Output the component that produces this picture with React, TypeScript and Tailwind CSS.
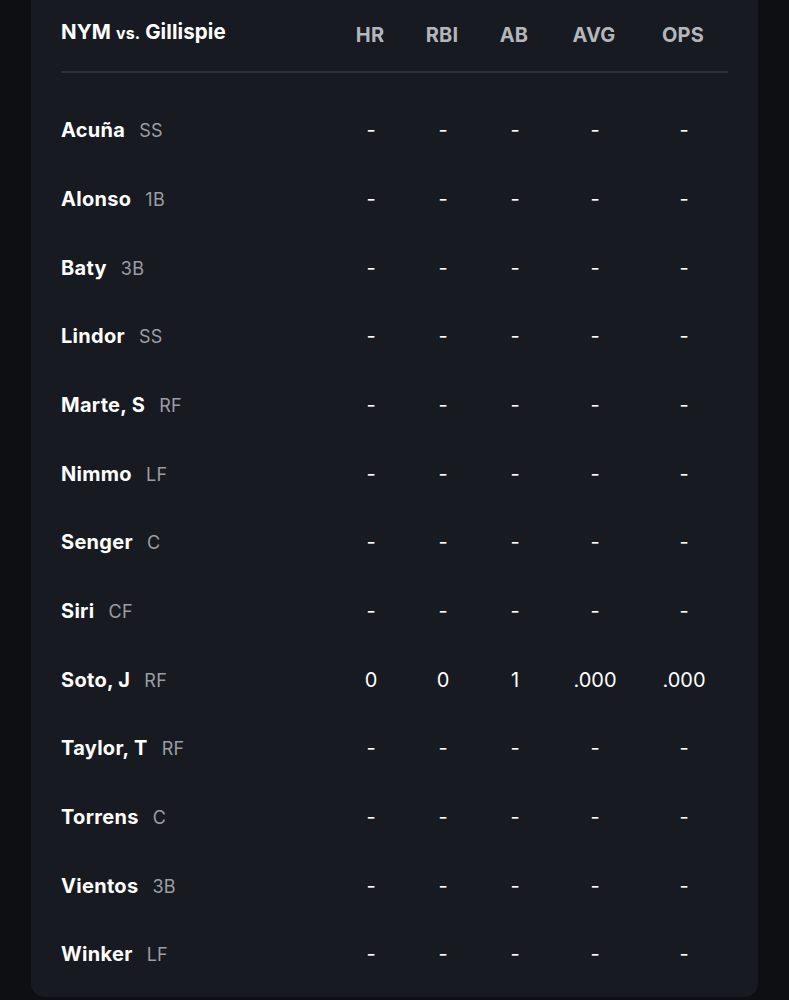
import React from "react";

type Row = {
	name: string;
	pos: string;
	stats?: [string, string, string, string, string];
};

const rows: Row[] = [
	{ name: "Acuña", pos: "SS" },
	{ name: "Alonso", pos: "1B" },
	{ name: "Baty", pos: "3B" },
	{ name: "Lindor", pos: "SS" },
	{ name: "Marte, S", pos: "RF" },
	{ name: "Nimmo", pos: "LF" },
	{ name: "Senger", pos: "C" },
	{ name: "Siri", pos: "CF" },
	{ name: "Soto, J", pos: "RF", stats: ["0", "0", "1", ".000", ".000"] },
	{ name: "Taylor, T", pos: "RF" },
	{ name: "Torrens", pos: "C" },
	{ name: "Vientos", pos: "3B" },
	{ name: "Winker", pos: "LF" },
];

const headers = ["HR", "RBI", "AB", "AVG", "OPS"];
// stat column widths, measured from the right edge
const colW = ["w-[72px]", "w-[72px]", "w-[72px]", "w-[88px]", "w-[90px]"];

export default function App() {
	return (
		<div
			className="min-h-screen bg-[#0d0f12] px-[31px] pb-[3px]"
			style={{ fontFamily: "Inter, 'Liberation Sans', sans-serif" }}
		>
			<div className="bg-[#171a20] rounded-b-[14px] px-[30px] pb-[8px]">
				{/* header */}
				<div className="flex items-center h-[64px]">
					<div className="flex-1 text-white font-bold text-[20.5px] tracking-[0.1px]">
						NYM <span className="text-[16px]">vs.</span> Gillispie
					</div>
					{headers.map((h, i) => (
						<div
							key={h}
							className={`${colW[i]} text-center text-[#b3b6bb] font-bold text-[20px] tracking-[0.2px] mt-[6px]`}
						>
							{h}
						</div>
					))}
				</div>
				<div className="mt-[7px] h-[2px] bg-[#2c3037]" />

				{/* rows */}
				<div className="pt-[23px]">
					{rows.map((r) => (
						<div key={r.name} className="flex items-center h-[68.67px]">
							<div className="flex-1 flex items-baseline gap-[14px]">
								<span className="text-white font-bold text-[20px] tracking-[0.3px]">
									{r.name}
								</span>
								<span className="text-[#9b9ea4] text-[18px] tracking-[0.3px]">
									{r.pos}
								</span>
							</div>
							{headers.map((h, i) => (
								<div
									key={h}
									className={`${colW[i]} text-center text-white text-[20px] pl-[2px]`}
								>
									{r.stats ? r.stats[i] : "-"}
								</div>
							))}
						</div>
					))}
				</div>
			</div>
		</div>
	);
}
